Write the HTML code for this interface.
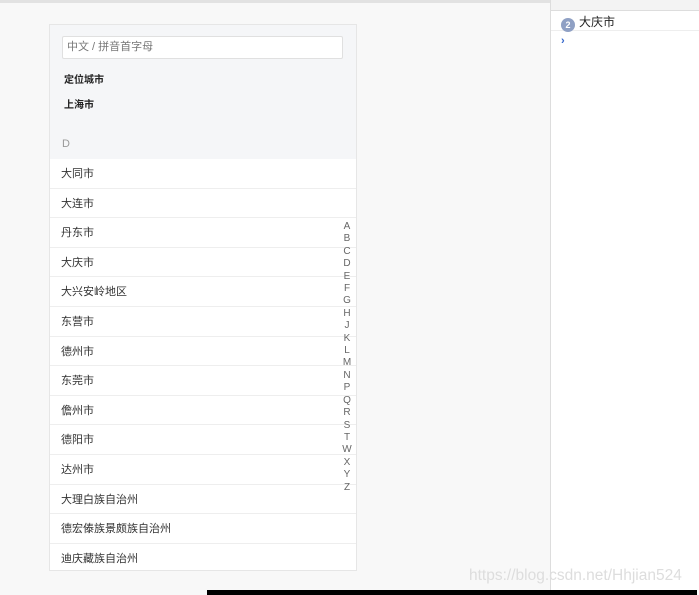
<!DOCTYPE html>
<html><head><meta charset="utf-8"><style>
*{margin:0;padding:0;box-sizing:border-box}
body{width:699px;height:595px;overflow:hidden;background:#f8f8f8;font-family:"Liberation Sans","Noto Sans CJK SC",sans-serif;position:relative}
.topbar{position:absolute;left:0;top:0;width:550px;height:3px;background:#e2e2e2}
.panel{position:absolute;left:49px;top:24px;width:308px;height:547px;border:1px solid #e6e6e6;background:#fff;overflow:hidden}
.head{background:#f5f6f8;height:134px;position:relative}
.search{position:absolute;left:12px;top:11px;width:281px;height:23px;background:#fff;border:1px solid #e0e0e0;border-radius:2px;font-size:11px;color:#777;padding:4px 4px;line-height:13px}
.lbl{position:absolute;left:14px;font-size:10px;font-weight:bold;color:#222}
.d{position:absolute;left:12px;top:113px;font-size:11px;color:#999}
.row{height:29.6px;border-bottom:1px solid #eee;font-size:11px;color:#333;padding-left:11px;padding-top:1px;line-height:29px}
.idx{position:absolute;left:291px;top:196px;width:12px;font-size:10px;color:#666;text-align:center;line-height:12.4px}
.right{position:absolute;left:550px;top:0;width:149px;height:595px;background:#fff;border-left:1px solid #ddd}
.tb{height:11px;border-bottom:1px solid #ddd;background:#f3f3f3}
.log{height:20px;border-bottom:1px solid #eee;font-size:12px;color:#222;padding-left:10px;padding-top:3px;line-height:17px}
.badge{display:inline-block;width:14px;height:14px;border-radius:50%;background:#8fa0c4;color:#fff;font-size:9px;line-height:14px;text-align:center;margin-right:4px;vertical-align:-2px;font-weight:bold}
.caret{font-size:11px;color:#3366cc;padding-left:10px;line-height:20px;font-weight:bold}
.black{position:absolute;left:207px;top:590px;width:490px;height:5px;background:#000}
.wm{position:absolute;left:469px;top:567px;font-size:15.5px;color:#ddd}
</style></head><body>
<div class="topbar"></div>
<div class="panel">
<div class="head">
<div class="search">中文 / 拼音首字母</div>
<div class="lbl" style="top:46px">定位城市</div>
<div class="lbl" style="top:71px">上海市</div>
<div class="d">D</div>
</div>
<div class="row">大同市</div>
<div class="row">大连市</div>
<div class="row">丹东市</div>
<div class="row">大庆市</div>
<div class="row">大兴安岭地区</div>
<div class="row">东营市</div>
<div class="row">德州市</div>
<div class="row">东莞市</div>
<div class="row">儋州市</div>
<div class="row">德阳市</div>
<div class="row">达州市</div>
<div class="row">大理白族自治州</div>
<div class="row">德宏傣族景颇族自治州</div>
<div class="row">迪庆藏族自治州</div>
<div class="idx">A<br>B<br>C<br>D<br>E<br>F<br>G<br>H<br>J<br>K<br>L<br>M<br>N<br>P<br>Q<br>R<br>S<br>T<br>W<br>X<br>Y<br>Z</div>
</div>
<div class="right">
<div class="tb"></div>
<div class="log"><span class="badge">2</span>大庆市</div>
<div class="caret">›</div>
</div>
<div class="wm">https://blog.csdn.net/Hhjian524</div>
<div class="black"></div>
</body></html>
